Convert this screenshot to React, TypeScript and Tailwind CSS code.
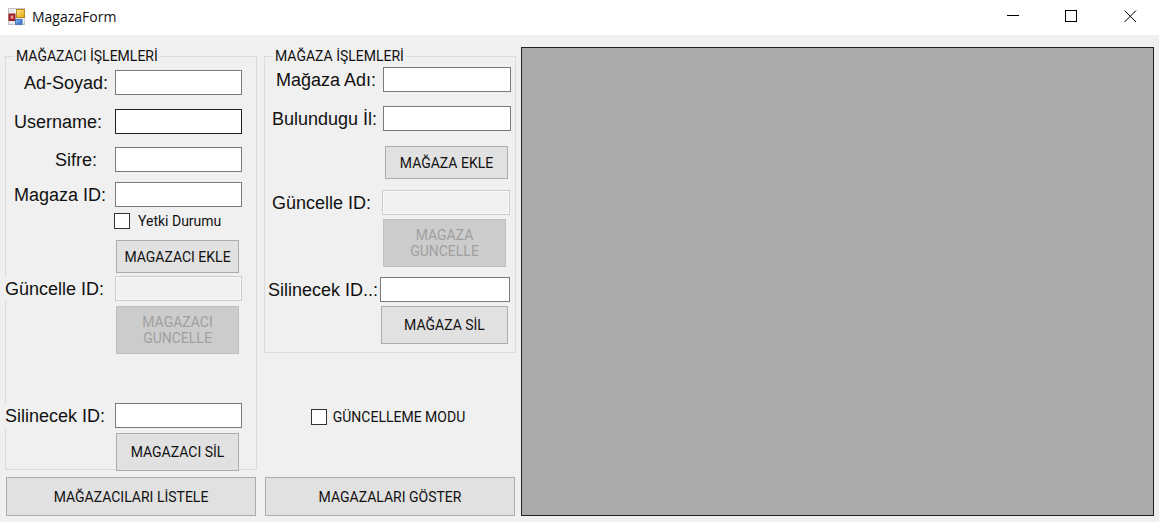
import React from 'react';

type FieldProps = {
  id: string;
  label: string;
  labelClass: string;
  inputClass?: string;
  rowClass: string;
  disabled?: boolean;
};

function Field({ id, label, labelClass, inputClass = 'w-[127px] border-[#7a7a7a]', rowClass, disabled }: FieldProps) {
  return (
    <div className={`flex items-center font-['Liberation_Sans',Arial,sans-serif] ${rowClass}`}>
      <label htmlFor={id} className={`shrink-0 whitespace-nowrap text-[18px] leading-6 ${labelClass}`}>
        {label}
      </label>
      <input
        id={id}
        type="text"
        disabled={disabled}
        className={`h-[25px] shrink-0 border bg-white px-1 text-base outline-none disabled:border-[#cccccc] disabled:bg-[#f0f0f0] disabled:shadow-[inset_0_0_0_1px_#f9f9f9] ${inputClass}`}
      />
    </div>
  );
}

function Button({ children, className }: { children: React.ReactNode; className: string }) {
  return (
    <button
      type="button"
      className={`block border border-[#adadad] bg-[#e1e1e1] text-center ${className}`}
    >
      {children}
    </button>
  );
}

function DisabledButton({ children, className }: { children: React.ReactNode; className: string }) {
  return (
    <button
      type="button"
      disabled
      className={`block border border-[#bfbfbf] bg-[#cccccc] px-4 text-center leading-4 text-[#a0a0a0] ${className}`}
    >
      {children}
    </button>
  );
}

function Check({ id, label, className, gap }: { id: string; label: string; className: string; gap: string }) {
  return (
    <div className={`flex items-center ${gap} ${className}`}>
      <input id={id} type="checkbox" className="size-4 appearance-none border border-[#333333] bg-white checked:bg-[#333333]" />
      <label htmlFor={id}>{label}</label>
    </div>
  );
}

function AppIcon() {
  return (
    <svg width="18" height="18" viewBox="0 0 18 18" aria-hidden="true">
      <defs>
        <linearGradient id="gold" x1="0" y1="0" x2="1" y2="1">
          <stop offset="0" stopColor="#ffe98a" />
          <stop offset="1" stopColor="#e5a50a" />
        </linearGradient>
        <linearGradient id="blue" x1="0" y1="0" x2="1" y2="1">
          <stop offset="0" stopColor="#8fbcf5" />
          <stop offset="1" stopColor="#2b62c4" />
        </linearGradient>
      </defs>
      <rect x="0.5" y="0.5" width="16" height="16" fill="#e9e9ec" stroke="#c3c3c8" />
      <path d="M1 6h16M1 11.5h16M7 1v16" stroke="#fafafa" />
      <rect x="1" y="6" width="6" height="6.5" fill="#b3262b" stroke="#8e1c20" />
      <rect x="2.7" y="7.7" width="2.6" height="3" fill="#e89a92" />
      <rect x="8.5" y="1.5" width="8" height="8" fill="url(#gold)" stroke="#b98a1c" />
      <rect x="7.5" y="11.5" width="6.5" height="5" fill="url(#blue)" stroke="#4a78c0" />
    </svg>
  );
}

function TitleBar() {
  return (
    <header className="flex h-[35px] items-center bg-white pb-0.5 pl-2">
      <AppIcon />
      <h1 className="ml-1.5 flex-1 font-['Open_Sans','Noto_Sans',sans-serif] text-[14px] leading-5">MagazaForm</h1>
      <div className="flex gap-[46px] pr-[22px]">
        <button type="button" aria-label="Simge durumuna küçült">
          <svg width="13" height="13" viewBox="0 0 13 13" stroke="#000" fill="none" shapeRendering="crispEdges">
            <path d="M1 5.5h12" />
          </svg>
        </button>
        <button type="button" aria-label="Ekranı kapla">
          <svg width="13" height="13" viewBox="0 0 13 13" stroke="#000" fill="none" shapeRendering="crispEdges">
            <rect x="0.5" y="0.5" width="11" height="11" />
          </svg>
        </button>
        <button type="button" aria-label="Kapat">
          <svg width="13" height="13" viewBox="0 0 13 13" stroke="#000" fill="none">
            <path d="M0.5 0.5l11.5 11.5M12 0.5l-11.5 11.5" />
          </svg>
        </button>
      </div>
    </header>
  );
}

export default function App() {
  return (
    <div className="flex min-h-screen flex-col bg-[#f0f0f0] font-['Roboto','Liberation_Sans',sans-serif] text-[#111111]">
      <TitleBar />
      <main className="flex flex-1 px-[5px] pt-3 pb-1.5 text-[14px] leading-[18px]">
        <section className="flex w-[252px] shrink-0 flex-col">
          <fieldset className="border border-[#dcdcdc]">
            <legend className="ml-2 px-0.5">MAĞAZACI İŞLEMLERİ</legend>
            <Field id="ad" label="Ad-Soyad:" rowClass="mt-[5px]" labelClass="w-[109px] pl-[18px]" />
            <Field id="user" label="Username:" rowClass="mt-3.5" labelClass="w-[109px] pl-2" inputClass="w-[127px] border-[#222222]" />
            <Field id="sifre" label="Sifre:" rowClass="mt-[13px]" labelClass="w-[109px] pl-[49px]" />
            <Field id="mid" label="Magaza ID:" rowClass="mt-2.5" labelClass="w-[109px] pl-2" />
            <Check id="yetki" label="Yetki Durumu" gap="gap-2" className="mt-[5px] ml-[108px]" />
            <Button className="mt-[10px] ml-[110px] h-[33px] w-[123px]">MAGAZACI EKLE</Button>
            <Field id="gid" label="Güncelle ID:" rowClass="mt-[3px]" labelClass="-ml-px w-[110px] bg-[#f0f0f0]" disabled />
            <DisabledButton className="mt-[5px] ml-[110px] h-12 w-[123px]">MAGAZACI GUNCELLE</DisabledButton>
            <Field id="sid" label="Silinecek ID:" rowClass="mt-[49px]" labelClass="-ml-px w-[110px] bg-[#f0f0f0]" />
            <Button className="mt-[5px] -mb-0.5 ml-[110px] h-[38px] w-[123px]">MAGAZACI SİL</Button>
          </fieldset>
          <Button className="mx-px mt-[7px] h-[39px]">MAĞAZACILARI LİSTELE</Button>
        </section>

        <section className="ml-[7px] flex w-[252px] shrink-0 flex-col">
          <fieldset className="border border-[#dcdcdc] pb-2">
            <legend className="ml-2 px-0.5">MAĞAZA İŞLEMLERİ</legend>
            <Field id="madi" label="Mağaza Adı:" rowClass="mt-0.5" labelClass="w-[118px] pl-[11px]" inputClass="w-32 border-[#7a7a7a]" />
            <Field id="il" label="Bulundugu İl:" rowClass="mt-3.5" labelClass="w-[118px] pl-[7px]" inputClass="w-32 border-[#7a7a7a]" />
            <Button className="mt-[15px] ml-[120px] h-[33px] w-[123px]">MAĞAZA EKLE</Button>
            <Field id="mgid" label="Güncelle ID:" rowClass="mt-[11px]" labelClass="w-[117px] pl-[7px]" inputClass="w-32" disabled />
            <DisabledButton className="mt-1 ml-[118px] h-12 w-[123px]">MAGAZA GUNCELLE</DisabledButton>
            <Field
              id="msid"
              label="Silinecek ID..:"
              rowClass="mt-2.5"
              labelClass="w-[115px] pl-[3px]"
              inputClass="w-[130px] border-[#7a7a7a]"
            />
            <Button className="mt-1 ml-[116px] h-[38px] w-[127px]">MAĞAZA SİL</Button>
          </fieldset>
          <Check id="mod" label="GÜNCELLEME MODU" gap="gap-1.5" className="flex-1 justify-center pt-1 pr-1" />
          <Button className="mx-px h-[39px]">MAGAZALARI GÖSTER</Button>
        </section>

        <section aria-label="Kayıtlar" className="ml-[5px] flex-1 border border-[#222222] bg-[#ababab]" />
      </main>
    </div>
  );
}
